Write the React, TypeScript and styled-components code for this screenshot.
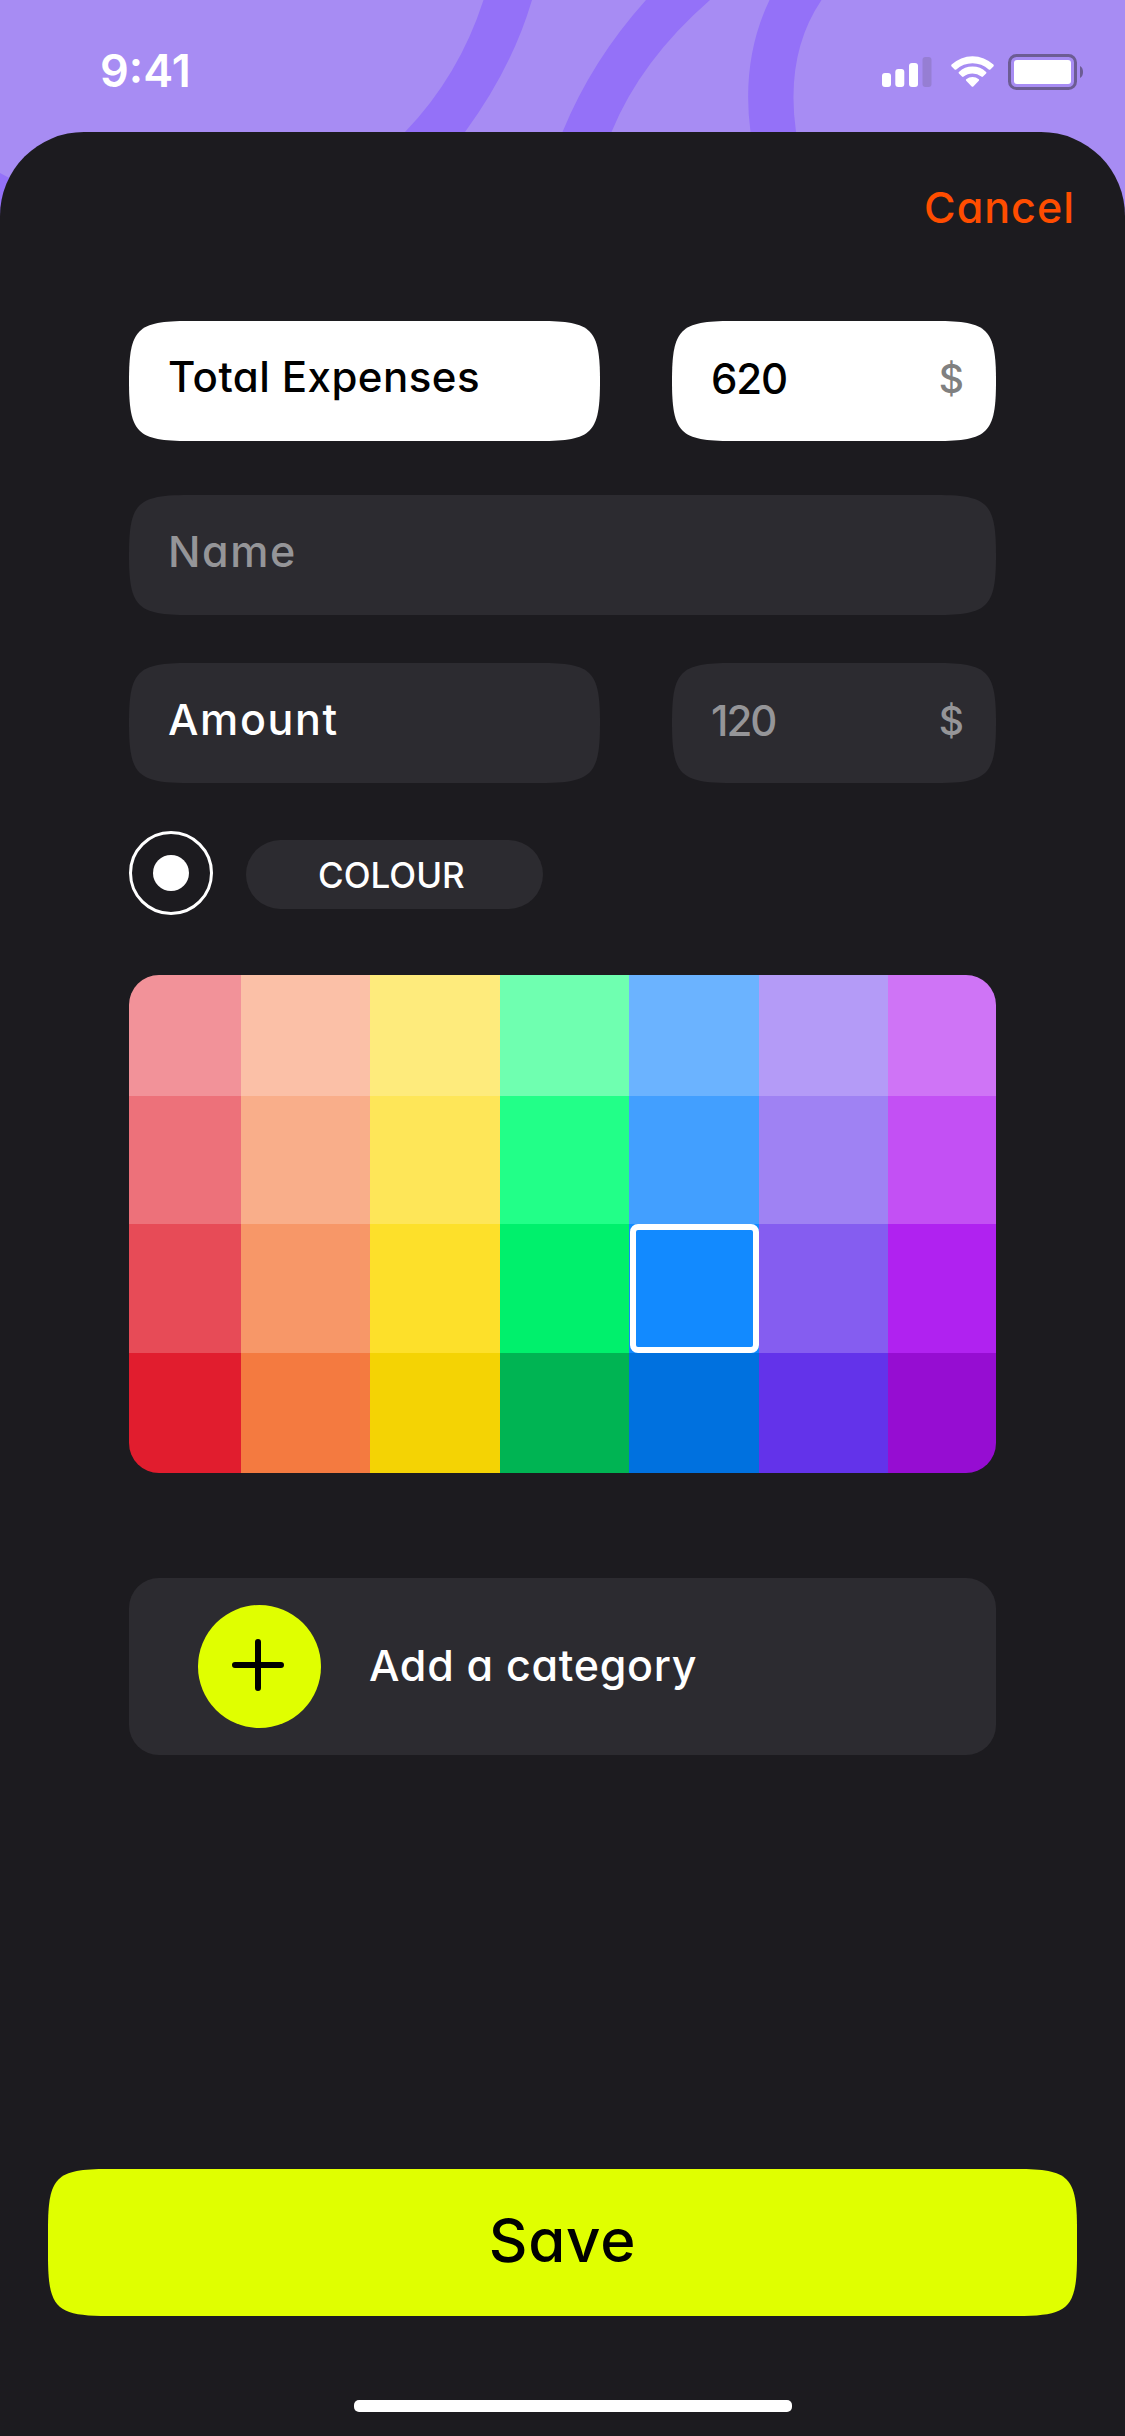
import React, { useState } from "react";
import styled, { createGlobalStyle } from "styled-components";

const Global = createGlobalStyle`
  * { box-sizing: border-box; }
  body { margin: 0; background: #1c1b1f; }
  button { border: 0; padding: 0; margin: 0; background: none; font: inherit; color: inherit; }
`;

/* Rounded rectangle with continuous (smoothed) corners. */
const smoothCorners = (w: number, h: number, r = 60, k = 8) =>
  `path("M0 ${r} C0 ${k} ${k} 0 ${r} 0 H${w - r} C${w - k} 0 ${w} ${k} ${w} ${r} V${h - r} C${w} ${h - k} ${w - k} ${h} ${w - r} ${h} H${r} C${k} ${h} 0 ${h - k} 0 ${h - r} Z")`;

const Screen = styled.div`
  width: 1125px;
  height: 2436px;
  position: relative;
  display: flex;
  flex-direction: column;
  overflow: hidden;
  background: #a78cf3;
  font-family: Inter, "Open Sans", sans-serif;
  font-feature-settings: "cv11" 1;
  font-weight: 500;
`;

const Backdrop = styled.svg`
  position: absolute;
  top: 0;
  left: 0;
`;

const StatusBar = styled.header`
  position: relative;
  height: 132px;
  flex: none;
  display: flex;
  justify-content: space-between;
  align-items: flex-start;
  padding: 43px 41px 0 100px;
`;

const StatusGlyphs = styled.svg`
  margin-top: 8px;
`;

const Label = styled.span<{ $size: number; $color: string; $spacing?: number; $weight?: number }>`
  display: block;
  white-space: nowrap;
  line-height: 56px;
  font-size: ${(p) => p.$size}px;
  font-weight: ${(p) => p.$weight ?? 500};
  color: ${(p) => p.$color};
  letter-spacing: ${(p) => p.$spacing ?? 0}px;
`;

const Sheet = styled.main`
  position: relative;
  flex: 1;
  display: flex;
  flex-direction: column;
  background: #1c1b1f;
  border-radius: 84px 84px 0 0;
`;

const TopBar = styled.div`
  height: 189px;
  flex: none;
  display: flex;
  justify-content: flex-end;
  align-items: flex-start;
  padding: 47px 50px 0 0;
`;

const Form = styled.div`
  display: flex;
  flex-direction: column;
  padding: 0 129px;
`;

const Row = styled.div<{ $gap: number }>`
  display: flex;
  justify-content: space-between;
  margin-bottom: ${(p) => p.$gap}px;
`;

const Field = styled.div<{ $width: number; $light?: boolean; $drop?: number }>`
  width: ${(p) => p.$width}px;
  height: 120px;
  display: flex;
  justify-content: space-between;
  padding: ${(p) => 28 + (p.$drop ?? 0)}px 32px 0 39px;
  background: ${(p) => (p.$light ? "#ffffff" : "#2c2b30")};
  clip-path: ${(p) => smoothCorners(p.$width, 120)};
`;

const ColourRow = styled.div`
  display: flex;
  align-items: flex-start;
  gap: 33px;
  height: 144px;
`;

const Radio = styled.button`
  width: 84px;
  height: 84px;
  border: 3px solid #ffffff;
  border-radius: 50%;
  display: flex;
  align-items: center;
  justify-content: center;
  &::after {
    content: "";
    width: 36px;
    height: 36px;
    border-radius: 50%;
    background: #ffffff;
  }
`;

const Pill = styled.div`
  width: 297px;
  height: 69px;
  margin-top: 9px;
  padding: 7px 0 0 72px;
  border-radius: 35px;
  background: #2c2b30;
`;

const Palette = styled.div`
  display: grid;
  grid-template-columns: 112px 129px 130px 129px 130px 129px 108px;
  grid-template-rows: 121px 128px 129px 120px;
  border-radius: 30px;
  overflow: hidden;
`;

const SwatchCell = styled.div<{ $color: string }>`
  display: grid;
  background: ${(p) => p.$color};
`;

const Swatch = styled.button<{ $color: string; $selected: boolean }>`
  background: ${(p) => p.$color};
  ${(p) => p.$selected && "margin-left: 1px; border: 6px solid #ffffff; border-radius: 8px;"}
`;

const AddCategory = styled.div`
  height: 177px;
  margin-top: 105px;
  display: flex;
  align-items: center;
  gap: 48px;
  padding-left: 69px;
  border-radius: 30px;
  background: #2c2b30;
`;

const AddButton = styled.button`
  width: 123px;
  height: 123px;
  border-radius: 50%;
  background: #e0ff00;
`;

const AddText = styled.div`
  padding-bottom: 4px;
`;

const SaveButton = styled.button`
  width: 1029px;
  height: 147px;
  margin: auto auto 84px;
  padding-bottom: 6px;
  flex: none;
  display: flex;
  align-items: center;
  justify-content: center;
  background: #e0ff00;
  clip-path: ${smoothCorners(1029, 147, 60, 8)};
`;

const HomeIndicator = styled.div`
  width: 438px;
  height: 12px;
  margin: 0 0 24px 354px;
  flex: none;
  border-radius: 5px;
  background: #ffffff;
`;

const palette = [
  ["#f29299", "#fbc0a7", "#feeb7c", "#6fffb0", "#6bb3ff", "#b49bf7", "#cf74f6"],
  ["#ed717a", "#f9ae8a", "#fee658", "#22ff88", "#429fff", "#9f82f3", "#c350f4"],
  ["#e74b57", "#f79768", "#fde02a", "#00f06c", "#128aff", "#855df0", "#b022f0"],
  ["#e11d2e", "#f47a40", "#f4d304", "#00b453", "#0071df", "#6333ea", "#960dd2"],
];

function StatusIcons() {
  return (
    <StatusGlyphs width="206" height="42" viewBox="878 51 206 42">
      <g fill="#fff">
        <rect x="882" y="73" width="9" height="14" rx="3" />
        <rect x="895.3" y="69" width="9" height="18" rx="3" />
        <rect x="909" y="63" width="9" height="24" rx="3" />
        <path d="M951.6 64.6 A30.5 30.5 0 0 1 993.4 64.6 Q994.2 65.5 993.4 66.4 L990.4 69.4 Q989.6 70.2 988.7 69.4 A24.2 24.2 0 0 0 956.3 69.4 Q955.4 70.2 954.6 69.4 L951.6 66.4 Q950.8 65.5 951.6 64.6 Z" />
        <path d="M958.9 71.9 A20 20 0 0 1 986.1 71.9 Q986.9 72.7 986.1 73.6 L983 76.6 Q982.2 77.3 981.3 76.6 A13.8 13.8 0 0 0 963.7 76.6 Q962.8 77.3 962 76.6 L958.9 73.6 Q958.1 72.7 958.9 71.9 Z" />
        <path d="M966.2 79.2 A10 10 0 0 1 978.8 79.2 Q979.5 80 978.8 80.8 L973.3 86.4 Q972.5 87.2 971.7 86.4 L966.2 80.8 Q965.5 80 966.2 79.2 Z" />
        <rect x="1014" y="60" width="57" height="24" rx="3" />
      </g>
      <rect x="922.5" y="57" width="9" height="30" rx="3" fill="#967ed3" />
      <rect x="1009.5" y="55.5" width="66" height="33" rx="7" fill="none" stroke="#6c5c93" strokeWidth="3" />
      <path d="M1080 66 Q1083 67.5 1083 72 Q1083 76.5 1080 78 Z" fill="#6c5c93" />
    </StatusGlyphs>
  );
}

export default function App() {
  const [selected, setSelected] = useState("2-4");
  return (
    <>
      <Global />
      <Screen>
        <Backdrop width="1125" height="230">
          <g fill="#9471f8">
            <path d="M483.5 0 Q459 76 405 132 L465 132 Q512 68 532 0 Z" />
            <path d="M646 0 Q592 60 562.5 132 L611.5 132 Q641 60 710 0 Z" />
            <path d="M769.5 0 Q741 60 750.5 132 L796 132 Q785 54 821.5 0 Z" />
            <path d="M0 173 L60 205 L60 230 L0 230 Z" />
          </g>
        </Backdrop>
        <StatusBar>
          <Label $size={45} $color="#fff" $weight={600}>9:41</Label>
          <StatusIcons />
        </StatusBar>
        <Sheet>
          <TopBar>
            <Label as="button" $size={43} $color="#ff4d00" $spacing={1}>Cancel</Label>
          </TopBar>
          <Form>
            <Row $gap={54}>
              <Field $width={471} $light>
                <Label $size={42} $color="#000" $spacing={0.45}>Total Expenses</Label>
              </Field>
              <Field $width={324} $light $drop={2}>
                <Label $size={42} $color="#000" $spacing={-1.2}>620</Label>
                <Label $size={39} $color="#808080">$</Label>
              </Field>
            </Row>
            <Row $gap={48}>
              <Field $width={867}>
                <Label $size={43} $color="#959598" $spacing={1.6}>Name</Label>
              </Field>
            </Row>
            <Row $gap={48}>
              <Field $width={471}>
                <Label $size={43} $color="#fff" $spacing={1.6}>Amount</Label>
              </Field>
              <Field $width={324} $drop={2}>
                <Label $size={42} $color="#959598" $spacing={-2}>120</Label>
                <Label $size={39} $color="#959598">$</Label>
              </Field>
            </Row>
            <ColourRow>
              <Radio aria-label="Colour" />
              <Pill>
                <Label $size={35} $color="#fff">COLOUR</Label>
              </Pill>
            </ColourRow>
            <Palette>
              {palette.map((row, r) =>
                row.map((color, c) => {
                  const id = `${r}-${c}`;
                  return (
                    <SwatchCell key={id} $color={color}>
                      <Swatch $color={color} $selected={selected === id} onClick={() => setSelected(id)} />
                    </SwatchCell>
                  );
                })
              )}
            </Palette>
            <AddCategory>
              <AddButton aria-label="Add">
                <svg width="123" height="123" viewBox="0 0 123 123" fill="none" stroke="#000" strokeWidth="6" strokeLinecap="round">
                  <path d="M60 37 V83 M37 60 H83" />
                </svg>
              </AddButton>
              <AddText>
                <Label $size={43} $color="#fff" $spacing={0.7}>Add a category</Label>
              </AddText>
            </AddCategory>
          </Form>
          <SaveButton>
            <Label $size={60} $color="#000" $spacing={0.8}>Save</Label>
          </SaveButton>
          <HomeIndicator />
        </Sheet>
      </Screen>
    </>
  );
}
